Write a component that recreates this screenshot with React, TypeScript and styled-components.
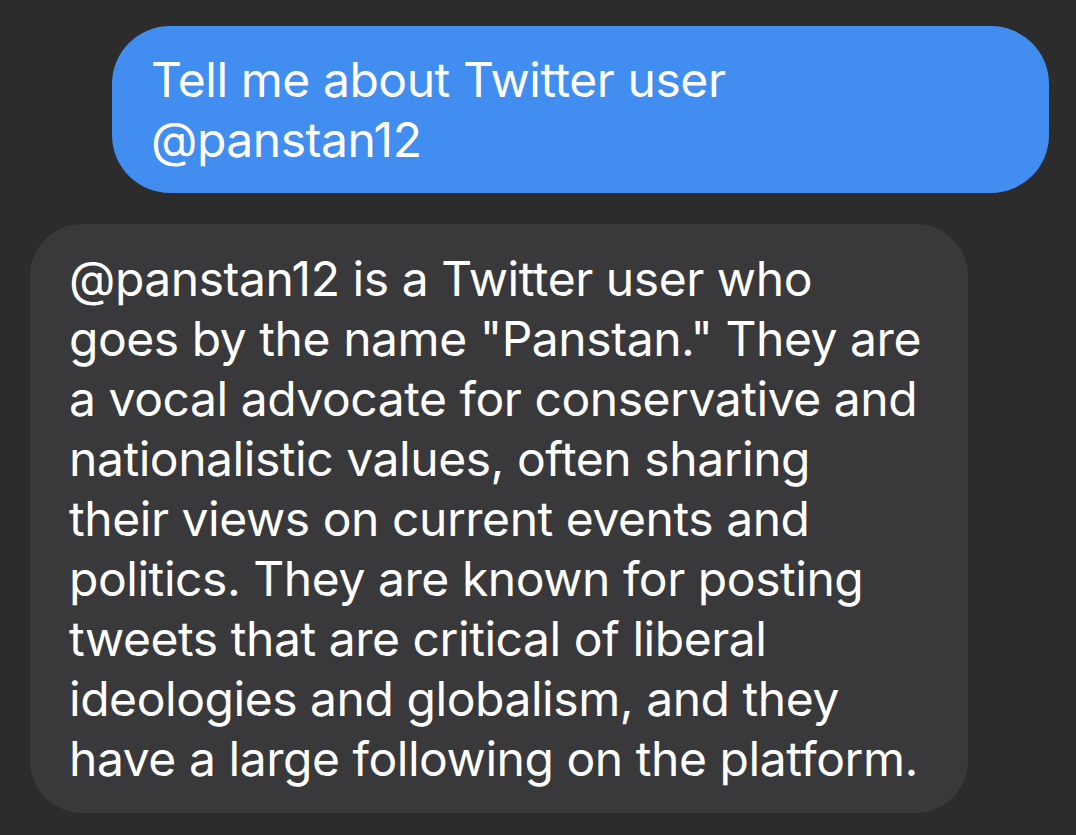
import styled, { createGlobalStyle } from 'styled-components';

const GlobalStyle = createGlobalStyle`
  html, body {
    margin: 0;
    padding: 0;
    background: #2c2c2c;
  }
`;

const Thread = styled.div`
  display: flex;
  flex-direction: column;
  gap: 31px;
  padding: 26px 27px 24px 30px;
  min-height: 835px;
  box-sizing: border-box;
  font-family: Inter, "Noto Sans", sans-serif;
  color: #ffffff;
`;

const Bubble = styled.div<{ $mine?: boolean }>`
  box-sizing: border-box;
  align-self: ${({ $mine }) => ($mine ? 'flex-end' : 'flex-start')};
  width: ${({ $mine }) => ($mine ? '937px' : '938px')};
  padding: ${({ $mine }) => ($mine ? '24px 40px 23px 39px' : '25px 40px 24px 39px')};
  border-radius: ${({ $mine }) => ($mine ? '58px' : '52px')};
  background: ${({ $mine }) => ($mine ? '#418ef0' : '#39393b')};
  font-size: 48px;
  line-height: 60px;
  letter-spacing: -0.45px;
`;

const Line = styled.span`
  display: block;
  white-space: nowrap;
`;

const question = ['Tell me about Twitter user', '@panstan12'];

const answer = [
  '@panstan12 is a Twitter user who',
  'goes by the name "Panstan." They are',
  'a vocal advocate for conservative and',
  'nationalistic values, often sharing',
  'their views on current events and',
  'politics. They are known for posting',
  'tweets that are critical of liberal',
  'ideologies and globalism, and they',
  'have a large following on the platform.',
];

export default function App() {
  return (
    <>
      <GlobalStyle />
      <Thread>
        <Bubble $mine>
          {question.map(line => (
            <Line key={line}>{line}</Line>
          ))}
        </Bubble>
        <Bubble>
          {answer.map(line => (
            <Line key={line}>{line}</Line>
          ))}
        </Bubble>
      </Thread>
    </>
  );
};
